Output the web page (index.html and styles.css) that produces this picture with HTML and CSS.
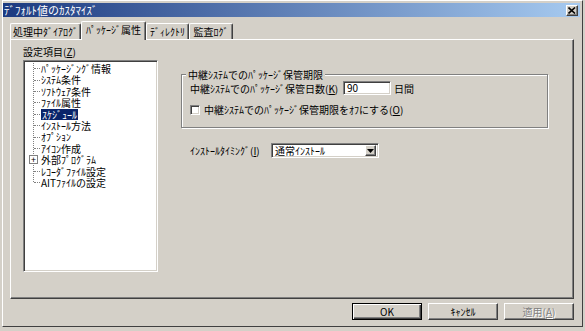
FILE: index.html
```html
<!DOCTYPE html>
<html lang="ja">

<head>
    <meta charset="UTF-8">
    <link rel="stylesheet" href="styles.css">
    <title>ﾃﾞﾌｫﾙﾄ値のｶｽﾀﾏｲｽﾞ</title>
</head>

<body>
    <div class="window">
        <div class="titlebar">
            <span class="title">ﾃﾞﾌｫﾙﾄ値のｶｽﾀﾏｲｽﾞ</span>
            <span class="close">
                <svg width="8" height="7" viewBox="0 0 8 7">
                    <path d="M0.5 0.5 L7 6.5 M7 0.5 L0.5 6.5" stroke="#000" stroke-width="1.6" fill="none" />
                </svg>
            </span>
        </div>

        <div class="tabs">
            <div class="tab tab1">処理中ﾀﾞｲｱﾛｸﾞ</div>
            <div class="tab tab2 active">ﾊﾟｯｹｰｼﾞ属性</div>
            <div class="tab tab3">ﾃﾞｨﾚｸﾄﾘ</div>
            <div class="tab tab4">監査ﾛｸﾞ</div>
        </div>

        <div class="panel">
            <div class="left">
                <p class="label">設定項目(<u>Z</u>)</p>
                <div class="tree">
                    <ul>
                        <li>ﾊﾟｯｹｰｼﾞﾝｸﾞ情報</li>
                        <li>ｼｽﾃﾑ条件</li>
                        <li>ｿﾌﾄｳｪｱ条件</li>
                        <li>ﾌｧｲﾙ属性</li>
                        <li><span class="selected">ｽｹｼﾞｭｰﾙ</span></li>
                        <li>ｲﾝｽﾄｰﾙ方法</li>
                        <li>ｵﾌﾟｼｮﾝ</li>
                        <li>ｱｲｺﾝ作成</li>
                        <li class="has-children"><span class="plus">+</span>外部ﾌﾟﾛｸﾞﾗﾑ</li>
                        <li>ﾚｺｰﾀﾞﾌｧｲﾙ設定</li>
                        <li>AITﾌｧｲﾙの設定</li>
                    </ul>
                </div>
            </div>

            <div class="right">
                <div class="group">
                    <p class="group-title">中継ｼｽﾃﾑでのﾊﾟｯｹｰｼﾞ保管期限</p>
                    <div class="row">
                        <span class="row-label">中継ｼｽﾃﾑでのﾊﾟｯｹｰｼﾞ保管日数(<u>K</u>)</span>
                        <span class="field">90</span>
                        <span class="unit">日間</span>
                    </div>
                    <div class="row check-row">
                        <span class="check"></span>
                        <span>中継ｼｽﾃﾑでのﾊﾟｯｹｰｼﾞ保管期限をｵﾌにする(<u>O</u>)</span>
                    </div>
                </div>

                <div class="row install-row">
                    <span class="install-label">ｲﾝｽﾄｰﾙﾀｲﾐﾝｸﾞ(<u>I</u>)</span>
                    <span class="combo">
                        <span class="combo-value">通常ｲﾝｽﾄｰﾙ</span>
                        <span class="combo-btn">
                            <svg width="7" height="4" viewBox="0 0 7 4">
                                <path d="M0 0 H7 L3.5 4 Z" fill="#000" />
                            </svg>
                        </span>
                    </span>
                </div>
            </div>
        </div>

        <div class="buttons">
            <button class="btn default">OK</button>
            <button class="btn">ｷｬﾝｾﾙ</button>
            <button class="btn disabled">適用(<u>A</u>)</button>
        </div>
    </div>
</body>

</html>
```

FILE: styles.css
```css
* {
    margin: 0;
    padding: 0;
    box-sizing: border-box;
}

body {
    width: 585px;
    height: 331px;
    overflow: hidden;
    background-color: #d4d0c8;
    font-family: "Noto Sans CJK JP", sans-serif;
    font-size: 10px;
    color: #000;
}

.window {
    width: 581px;
    height: 327px;
    margin-left: 2px;
    border-top: 1px solid #fff;
    border-left: 1px solid #fff;
    border-right: 1px solid #404040;
    border-bottom: 1px solid #404040;
    padding: 2px 0 0 0;
}

/* title bar */
.titlebar {
    height: 14px;
    margin-right: 2px;
    display: flex;
    align-items: center;
    justify-content: space-between;
    padding: 0 2px 0 1px;
    background: linear-gradient(to right, #1c3a80, #a6caf0);
    color: #fff;
}

.title {
    font-size: 11px;
    line-height: 14px;
}

.close {
    width: 12px;
    height: 11px;
    display: flex;
    align-items: center;
    justify-content: center;
    background-color: #d4d0c8;
    border-top: 1px solid #fff;
    border-left: 1px solid #fff;
    border-right: 1px solid #404040;
    border-bottom: 1px solid #404040;
    box-shadow: inset -1px -1px 0 #808080;
}

/* tabs */
.tabs {
    display: flex;
    align-items: flex-end;
    height: 19px;
    margin: 4px 0 -1px 7px;
    position: relative;
    z-index: 1;
}

.tab {
    height: 16px;
    margin-bottom: 1px;
    line-height: 15px;
    text-align: center;
    background-color: #d4d0c8;
    border-top: 1px solid #fff;
    border-left: 1px solid #fff;
    border-right: 1px solid #404040;
    box-shadow: inset -1px 0 0 #808080;
    border-radius: 2px 2px 0 0;
}

.tab1 {
    width: 71px;
}

.tab2 {
    width: 65px;
}

.tab3 {
    width: 43px;
}

.tab4 {
    width: 44px;
}

.tab.active {
    height: 19px;
    margin-bottom: 0;
    line-height: 16px;
}

/* main panel */
.panel {
    width: 564px;
    height: 260px;
    margin-left: 7px;
    display: flex;
    padding: 6px 0 0 12px;
    border-top: 1px solid #fff;
    border-left: 1px solid #fff;
    border-right: 1px solid #404040;
    border-bottom: 1px solid #404040;
    box-shadow: inset -1px -1px 0 #808080;
}

.left {
    width: 135px;
}

.label {
    line-height: 11px;
    margin-bottom: 3px;
}

.tree {
    height: 212px;
    background-color: #fff;
    border-top: 1px solid #808080;
    border-left: 1px solid #808080;
    border-right: 1px solid #fff;
    border-bottom: 1px solid #fff;
    box-shadow: inset 1px 1px 0 #404040, inset -1px -1px 0 #d4d0c8;
    padding: 1px;
}

.tree ul {
    list-style: none;
    padding-top: 1px;
    background-image: repeating-linear-gradient(to bottom, #808080 0 1px, transparent 1px 2px);
    background-size: 1px 119px;
    background-position: 8px 1px;
    background-repeat: no-repeat;
}

.tree li {
    height: 11.4px;
    line-height: 11.4px;
    display: flex;
    align-items: center;
    padding-left: 9px;
    white-space: nowrap;
}

.tree li::before {
    content: "";
    width: 6px;
    height: 0;
    border-top: 1px dotted #808080;
    margin-right: 1px;
}

.tree li.has-children {
    padding-left: 4px;
}

.tree li.has-children::before {
    display: none;
}

.plus {
    width: 9px;
    height: 9px;
    border: 1px solid #808080;
    background-color: #fff;
    font-size: 9px;
    line-height: 7px;
    text-align: center;
    margin-right: 3px;
}

.selected {
    background-color: #0a246a;
    color: #fff;
    padding: 0 1px;
    line-height: 11px;
}

/* right side */
.right {
    margin-left: 23px;
    width: 367px;
}

.group {
    margin-top: 28px;
    height: 54px;
    padding: 0 8px 0 8px;
    border: 1px solid #808080;
    box-shadow: inset 1px 1px 0 #fff, 1px 1px 0 #fff;
}

.group-title {
    display: table;
    margin: -6px 0 0 -4px;
    padding: 0 2px;
    line-height: 11px;
    background-color: #d4d0c8;
}

.row {
    display: flex;
    align-items: center;
    white-space: nowrap;
}

.group .row:nth-of-type(1) {
    margin-top: 1px;
    height: 14px;
}

.row-label {
    width: 153px;
}

.field,
.combo {
    background-color: #fff;
    border-top: 1px solid #808080;
    border-left: 1px solid #808080;
    border-right: 1px solid #fff;
    border-bottom: 1px solid #fff;
    box-shadow: inset 1px 1px 0 #404040, inset -1px -1px 0 #d4d0c8;
}

.field {
    width: 48px;
    height: 14px;
    line-height: 12px;
    padding-left: 3px;
}

.unit {
    margin-left: 3px;
}

.check-row {
    margin-top: 9px;
    height: 11px;
}

.check {
    width: 10px;
    height: 10px;
    margin-right: 4px;
    background-color: #fff;
    border-top: 1px solid #808080;
    border-left: 1px solid #808080;
    border-right: 1px solid #fff;
    border-bottom: 1px solid #fff;
    box-shadow: inset 1px 1px 0 #404040, inset -1px -1px 0 #d4d0c8;
}

.install-row {
    margin-top: 15px;
    height: 15px;
    padding-left: 9px;
}

.install-label {
    width: 81px;
}

.combo {
    width: 108px;
    height: 15px;
    display: flex;
    align-items: center;
    justify-content: space-between;
    padding: 2px;
}

.combo-value {
    padding-left: 1px;
    line-height: 11px;
}

.combo-btn {
    width: 11px;
    height: 11px;
    display: flex;
    align-items: center;
    justify-content: center;
    background-color: #d4d0c8;
    border-top: 1px solid #fff;
    border-left: 1px solid #fff;
    border-right: 1px solid #404040;
    border-bottom: 1px solid #404040;
    box-shadow: inset -1px -1px 0 #808080;
}

/* bottom buttons */
.buttons {
    width: 564px;
    margin: 4px 0 0 7px;
    display: flex;
    justify-content: flex-end;
    gap: 6px;
}

.btn {
    width: 70px;
    height: 17px;
    font-family: inherit;
    font-size: 10px;
    line-height: 14px;
    color: #000;
    background-color: #d4d0c8;
    border-top: 1px solid #fff;
    border-left: 1px solid #fff;
    border-right: 1px solid #404040;
    border-bottom: 1px solid #404040;
    box-shadow: inset -1px -1px 0 #808080;
}

.btn.default {
    border: 1px solid #000;
    box-shadow: inset 1px 1px 0 #fff, inset -1px -1px 0 #404040, inset -2px -2px 0 #808080;
}

.btn.disabled {
    color: #808080;
    text-shadow: 1px 1px 0 #fff;
}
```
